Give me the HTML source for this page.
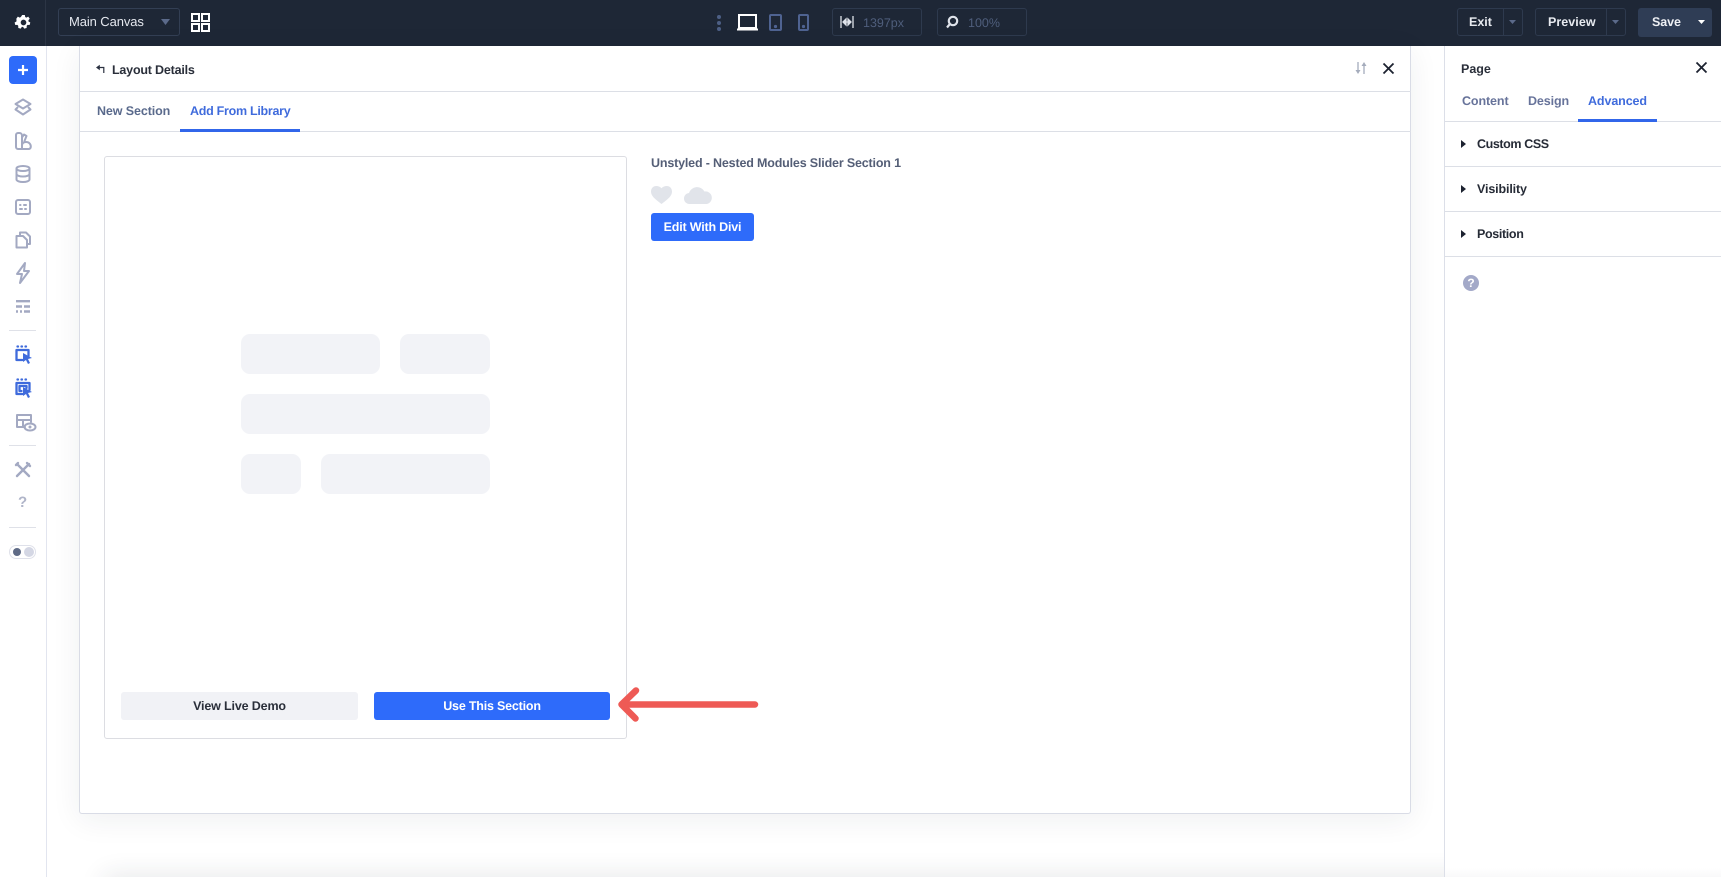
<!DOCTYPE html>
<html lang="en"><head><meta charset="utf-8"><title>Layout Details</title>
<style>
*{box-sizing:border-box}
html,body{margin:0;padding:0;width:1721px;height:877px;overflow:hidden;background:#fff;font-family:"Liberation Sans",sans-serif;text-rendering:geometricPrecision}
#root{position:relative;width:1721px;height:877px;overflow:hidden;background:#fff}
.a{position:absolute}
.t{position:absolute;white-space:nowrap;line-height:16px}
svg{position:absolute;overflow:visible}
.ic{fill:none;stroke:#a3a9c2;stroke-width:2;stroke-linecap:round;stroke-linejoin:round}
.bl{fill:none;stroke:#3f6bdc;stroke-width:2.300;stroke-linecap:round;stroke-linejoin:round}
.box{position:absolute;border:1px solid #2e3a4e;border-radius:3px;height:28px;top:8px}
.hr{position:absolute;height:1px;background:#dcdfe6}
.sk{position:absolute;background:#f2f3f7;border-radius:9px}
</style></head><body><div id="root">
<div class="a" style="left:47px;top:830px;width:1674px;height:47px;overflow:hidden"><div class="a" style="left:63px;top:52px;width:1600px;height:10px;box-shadow:0 0 26px 6px rgba(30,40,60,.12)"></div></div>

<!-- top bar -->
<div class="a" style="left:0;top:0;width:1721px;height:46px;background:#1e2736"></div>
<div class="a" style="left:45px;top:0;width:1px;height:46px;background:#2c3545"></div>
<svg style="left:15px;top:14px" width="17" height="17" viewBox="0 0 18 18"><path fill="#fff" fill-rule="evenodd" d="M7.600 1h2.800l.4 2.200 1.200.6 2-1 1.600 2.200-1.400 1.600.1 1.400 1.900 1-.7 2.600-2.200-.1-.9 1-.1 2.300-2.600.7-1.100-1.900h-1.400l-1.100 1.900-2.600-.7-.1-2.300-.9-1-2.200.1-.7-2.600 1.900-1 .1-1.400L1.400 5 3 2.800l2 1 1.200-.6zM9 6a3 3 0 1 0 0 6 3 3 0 0 0 0-6z"/></svg>
<div class="box" style="left:58px;width:122px;border-color:#333f54"></div>
<div class="t" style="left:69px;top:14px;font-size:13px;color:#e4e7ee;letter-spacing:-.1px">Main Canvas</div>
<svg style="left:161px;top:19px" width="9" height="7"><path d="M0 0h9L4.500 6z" fill="#5b6a8a"/></svg>
<svg style="left:191px;top:13px" width="19" height="19" fill="none" stroke="#fff" stroke-width="2"><rect x="1" y="1" width="7" height="7"/><rect x="11" y="1" width="7" height="7"/><rect x="1" y="11" width="7" height="7"/><rect x="11" y="11" width="7" height="7"/></svg>

<svg style="left:716px;top:14px" width="6" height="18" fill="#4d5f85"><circle cx="3" cy="3" r="2"/><circle cx="3" cy="9" r="2"/><circle cx="3" cy="15" r="2"/></svg>
<svg style="left:737px;top:14px" width="21" height="17" fill="none" stroke="#fff" stroke-width="2"><rect x="2" y="1" width="17" height="13"/><path d="M0 15.500h21"/></svg>
<svg style="left:769px;top:14px" width="13" height="17" fill="none" stroke="#4f6391" stroke-width="2"><rect x="1" y="1" width="11" height="15" rx="1"/><circle cx="6.500" cy="12.500" r=".6" fill="#4f6391"/></svg>
<svg style="left:798px;top:14px" width="11" height="17" fill="none" stroke="#4f6391" stroke-width="2"><rect x="1" y="1" width="9" height="15" rx="1"/><circle cx="5.500" cy="12.500" r=".6" fill="#4f6391"/></svg>
<div class="box" style="left:832px;width:90px"></div>
<svg style="left:840px;top:15px" width="14" height="14" fill="none" stroke="#dfe3ea" stroke-width="1.300"><path d="M1 1v12M13 1v12M3 7h8"/><path d="M3 7l3-3v6zM11 7L8 4v6z" fill="#dfe3ea"/></svg>
<div class="t" style="left:863px;top:15px;font-size:12.500px;color:#4f5e7c">1397px</div>
<div class="box" style="left:937px;width:90px"></div>
<svg style="left:945px;top:15px" width="14" height="14" fill="none" stroke="#dfe3ea" stroke-width="2.200"><circle cx="8" cy="6" r="4.200"/><path d="M4.500 9.500L2 12.500"/></svg>
<div class="t" style="left:968px;top:15px;font-size:12.500px;color:#4f5e7c">100%</div>

<div class="box" style="left:1457px;width:66px"></div>
<div class="a" style="left:1503px;top:8px;width:1px;height:28px;background:#2e3a4e"></div>
<div class="t" style="left:1469px;top:14px;font-size:12.500px;font-weight:700;color:#e8ebf0">Exit</div>
<svg style="left:1509px;top:20px" width="8" height="5"><path d="M0 0h7L3.500 4z" fill="#5b6a8a"/></svg>
<div class="box" style="left:1535px;width:91px"></div>
<div class="a" style="left:1606px;top:8px;width:1px;height:28px;background:#2e3a4e"></div>
<div class="t" style="left:1548px;top:14px;font-size:12.500px;font-weight:700;color:#e8ebf0;letter-spacing:.05px">Preview</div>
<svg style="left:1612px;top:20px" width="8" height="5"><path d="M0 0h7L3.500 4z" fill="#5b6a8a"/></svg>
<div class="a" style="left:1638px;top:8px;width:74px;height:29px;background:#2f3d55;border-radius:3px"></div>
<div class="t" style="left:1652px;top:14px;font-size:12.500px;font-weight:700;color:#eef0f4;letter-spacing:-.1px">Save</div>
<svg style="left:1698px;top:20px" width="8" height="5"><path d="M0 0h7L3.500 4z" fill="#fff"/></svg>

<!-- sidebar -->
<div class="a" style="left:46px;top:46px;width:1px;height:831px;background:#e2e5ef"></div>
<div class="a" style="left:9px;top:56px;width:28px;height:28px;background:#2e6bfa;border-radius:4px"></div>
<svg style="left:18px;top:65px" width="10" height="10" stroke="#fff" stroke-width="2.200"><path d="M5 0v10M0 5h10"/></svg>
<svg style="left:14px;top:98px" width="18" height="18"><path class="ic" d="M9 1.500L16.500 6 9 10.500 1.500 6z"/><path class="ic" d="M3.500 9.500L1.500 11.500 9 16.500l7.500-5-2-2"/></svg>
<svg style="left:14px;top:132px" width="18" height="18"><path class="ic" d="M2 3a2 2 0 0 1 2-2h1.500a2.500 2.500 0 0 1 2.500 2.500V17H4a2 2 0 0 1-2-2zM8 5.500L10 2.500 12.500 4 10.500 9M8 17h7a2.500 2.500 0 0 0 1.800-2.500c0-2.500-2-4.500-4.500-4.500S8 11 8 13.500"/></svg>
<svg style="left:15px;top:165px" width="16" height="18"><ellipse class="ic" cx="8" cy="3.500" rx="6.500" ry="2.500"/><path class="ic" d="M1.500 3.500v11c0 1.400 3 2.500 6.500 2.500s6.500-1.100 6.500-2.500v-11M1.500 9c0 1.400 3 2.500 6.500 2.500s6.500-1.100 6.500-2.500"/></svg>
<svg style="left:15px;top:199px" width="16" height="16"><rect class="ic" x="1" y="1" width="14" height="14" rx="2"/><path class="ic" d="M5 6h.5M9 6h2M5 10h2M10 10h1"/></svg>
<svg style="left:15px;top:231px" width="16" height="18"><path class="ic" d="M5 4V1.500h6l4 4V13h-3M1.500 5H8l4 4v7.500H1.500z"/></svg>
<svg style="left:15px;top:262px" width="16" height="22"><path class="ic" d="M10 1L2 12h5l-2 9 9-12H9z"/></svg>
<svg style="left:15px;top:300px" width="16" height="13" stroke="#a3a9c2" stroke-width="2.400"><path d="M1 1.200h14M1 6.500h6M9 6.500h6M1 11.500h2M5 11.500h2M9 11.500h6"/></svg>
<div class="hr" style="left:9px;top:330px;width:27px;background:#dfe1e8"></div>
<svg style="left:15px;top:345px" width="18" height="20"><path class="bl" d="M2.500 1.500h.5M6.500 1.500h.5M10.500 1.500h.5"/><path class="bl" d="M1.500 5h12v6M1.500 5v10h6"/><path d="M8 8l9 5-4 1 2 4-2 1-2-4-3 2z" fill="#3f6bdc"/></svg>
<svg style="left:15px;top:378px" width="18" height="20"><path class="bl" d="M2.500 1.500h.5M6.500 1.500h.5M10.500 1.500h.5"/><path class="bl" d="M1.500 5h13v7M1.500 5v11h6M4.500 8h7v2M4.500 8v5h2"/><path d="M8 9l9 5-4 1 2 4-2 1-2-4-3 2z" fill="#3f6bdc"/></svg>
<svg style="left:15px;top:413px" width="22" height="20"><path class="ic" d="M10 14H2V2h14v7M2 7h14M8 7v7"/><ellipse class="ic" cx="15" cy="14" rx="5.500" ry="3.500"/><circle cx="15" cy="14" r="1.500" fill="#a3a9c2"/></svg>
<div class="hr" style="left:9px;top:445px;width:27px;background:#dfe1e8"></div>
<svg style="left:15px;top:462px" width="16" height="16" fill="none" stroke="#a3a9c2" stroke-width="2.400" stroke-linecap="round"><path d="M2 2l12 12M14 2L2 14M12 1l3 3M1 3l2-2"/></svg>
<div class="t" style="left:18px;top:495px;font-size:15px;font-weight:700;color:#b0b5c9">?</div>
<div class="hr" style="left:9px;top:527px;width:27px;background:#dfe1e8"></div>
<div class="a" style="left:9px;top:545px;width:27px;height:14px;border:1px solid #dfe1ea;border-radius:7px"></div>
<div class="a" style="left:12.500px;top:548px;width:8px;height:8px;border-radius:50%;background:#5f6b86"></div>
<div class="a" style="left:24px;top:547px;width:10px;height:10px;border-radius:50%;background:#d4d7e4"></div>

<!-- modal -->
<div class="a" style="left:79px;top:46px;width:1332px;height:768px;background:#fff;border:1px solid #d9dce6;border-top:0;border-radius:0 0 3px 3px;box-shadow:0 6px 30px rgba(30,40,60,.07)"></div>
<svg style="left:96px;top:64px" width="9" height="10" fill="none" stroke="#2a3140" stroke-width="1.200"><path d="M3 3.500H7.800V9"/><path d="M0 3.500L3.800.8v5.400z" fill="#2a3140" stroke="none"/></svg>
<div class="t" style="left:112px;top:62px;font-size:12.500px;font-weight:700;color:#2a2f3a;letter-spacing:-.2px">Layout Details</div>
<svg style="left:1355px;top:61px" width="13" height="14" fill="none" stroke="#a5acbc" stroke-width="1.300"><path d="M3 1v10M9 13V3"/><path d="M.5 9h5L3 13zM6.500 5h5L9 1z" fill="#a5acbc" stroke="none"/></svg>
<svg style="left:1383px;top:63px" width="11" height="11" stroke="#1c2230" stroke-width="1.800"><path d="M.5.500l10 10M10.500.500l-10 10"/></svg>
<div class="hr" style="left:80px;top:91px;width:1331px"></div>
<div class="t" style="left:97px;top:103px;font-size:12.500px;font-weight:700;color:#5a6a8c;letter-spacing:-.1px">New Section</div>
<div class="t" style="left:190px;top:103px;font-size:12.500px;font-weight:700;color:#3f6bdc;letter-spacing:-.28px">Add From Library</div>
<div class="hr" style="left:80px;top:131px;width:1331px"></div>
<div class="a" style="left:180px;top:129px;width:120px;height:3px;background:#3166ea"></div>

<!-- card -->
<div class="a" style="left:104px;top:156px;width:523px;height:583px;border:1px solid #dcdde2;border-radius:3px;background:#fff"></div>
<div class="sk" style="left:241px;top:334px;width:139px;height:40px"></div>
<div class="sk" style="left:400px;top:334px;width:90px;height:40px"></div>
<div class="sk" style="left:241px;top:394px;width:249px;height:40px"></div>
<div class="sk" style="left:241px;top:454px;width:60px;height:40px"></div>
<div class="sk" style="left:321px;top:454px;width:169px;height:40px"></div>
<div class="a" style="left:121px;top:692px;width:237px;height:28px;background:#f1f2f6;border-radius:3px"></div>
<div class="t" style="left:121px;top:697.500px;width:237px;text-align:center;font-size:12.500px;font-weight:700;color:#2a2f3a;letter-spacing:-.15px">View Live Demo</div>
<div class="a" style="left:374px;top:692px;width:236px;height:28px;background:#2e6bfa;border-radius:3px"></div>
<div class="t" style="left:374px;top:697.500px;width:236px;text-align:center;font-size:12.500px;font-weight:700;color:#fff;letter-spacing:-.2px">Use This Section</div>
<svg style="left:610px;top:679px" width="160" height="50" fill="none" stroke="#ee5a55" stroke-width="6.500" stroke-linecap="round" stroke-linejoin="round"><path d="M145 25.500H11.500M26 11.500L11.500 25.500 25.500 39.500"/></svg>

<div class="t" style="left:651px;top:155px;font-size:12.500px;font-weight:700;color:#545e76;letter-spacing:-.17px">Unstyled - Nested Modules Slider Section 1</div>
<svg style="left:651px;top:186px" width="21" height="18"><path fill="#e1e4ea" d="M10.500 18C3 12.500 0 9.500 0 5.500 0 2.300 2.300 0 5.300 0c2.100 0 3.900.8 5.200 2.300C11.800.8 13.600 0 15.700 0 18.700 0 21 2.300 21 5.500 21 9.500 18 12.500 10.500 18z"/></svg>
<svg style="left:684px;top:186px" width="28" height="18"><path fill="#e1e4ea" d="M6 18a5.500 5.500 0 0 1-1-11A8.500 8.500 0 0 1 20.500 5.500 6.300 6.300 0 0 1 22.500 18z"/></svg>
<div class="a" style="left:651px;top:213px;width:103px;height:28px;background:#2e6bfa;border-radius:3px"></div>
<div class="t" style="left:651px;top:219px;width:103px;text-align:center;font-size:12.500px;font-weight:700;color:#fff;letter-spacing:-.2px">Edit With Divi</div>

<!-- right panel -->
<div class="a" style="left:1444px;top:46px;width:277px;height:831px;background:#fff;border-left:1px solid #dcdfe8"></div>
<div class="a" style="left:1445px;top:868px;width:276px;height:9px;background:linear-gradient(#fff,#f9f9fa)"></div>
<div class="t" style="left:1461px;top:61px;font-size:12.500px;font-weight:700;color:#2a2f3a">Page</div>
<svg style="left:1696px;top:62px" width="11" height="11" stroke="#1c2230" stroke-width="1.800"><path d="M.5.500l10 10M10.500.500l-10 10"/></svg>
<div class="t" style="left:1462px;top:93px;font-size:12.500px;font-weight:700;color:#67739a;letter-spacing:-.1px">Content</div>
<div class="t" style="left:1528px;top:93px;font-size:12.500px;font-weight:700;color:#67739a;letter-spacing:-.1px">Design</div>
<div class="t" style="left:1588px;top:93px;font-size:12.500px;font-weight:700;color:#3f6bdc;letter-spacing:-.1px">Advanced</div>
<div class="hr" style="left:1445px;top:121px;width:276px"></div>
<div class="a" style="left:1578px;top:119px;width:79px;height:3px;background:#3166ea"></div>
<svg style="left:1461px;top:140px" width="6" height="8"><path d="M0 0l5 4-5 4z" fill="#1c2230"/></svg>
<div class="t" style="left:1477px;top:136px;font-size:12.500px;font-weight:700;color:#262b36;letter-spacing:-.4px">Custom CSS</div>
<div class="hr" style="left:1445px;top:166px;width:276px"></div>
<svg style="left:1461px;top:185px" width="6" height="8"><path d="M0 0l5 4-5 4z" fill="#1c2230"/></svg>
<div class="t" style="left:1477px;top:181px;font-size:12.500px;font-weight:700;color:#262b36;letter-spacing:-.13px">Visibility</div>
<div class="hr" style="left:1445px;top:211px;width:276px"></div>
<svg style="left:1461px;top:230px" width="6" height="8"><path d="M0 0l5 4-5 4z" fill="#1c2230"/></svg>
<div class="t" style="left:1477px;top:226px;font-size:12.500px;font-weight:700;color:#262b36;letter-spacing:-.35px">Position</div>
<div class="hr" style="left:1445px;top:256px;width:276px"></div>
<div class="a" style="left:1463px;top:275px;width:16px;height:16px;border-radius:50%;background:#a3a9c8"></div>
<div class="t" style="left:1463px;top:275px;width:16px;text-align:center;font-size:12px;font-weight:700;color:#fff">?</div>
</div></body></html>
